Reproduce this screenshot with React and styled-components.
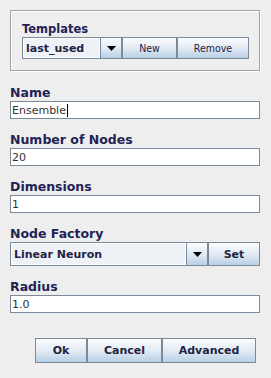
import React from "react";
import styled, { createGlobalStyle } from "styled-components";

const Global = createGlobalStyle`
  html, body { margin: 0; padding: 0; background: #eeeeee; }
  body { font-family: "DejaVu Sans", "Liberation Sans", sans-serif; }
`;

const Page = styled.div`
  width: 250px;
  padding: 10px 11px 0 10px;
  display: flex;
  flex-direction: column;
`;

const Panel = styled.div`
  border: 1px solid #a3a3a3;
  box-shadow: inset 1px 1px 0 #ffffff, 1px 1px 0 #ffffff;
  padding: 10px 10px 10px 11px;
  display: flex;
  flex-direction: column;
  height: 61px;
  box-sizing: border-box;
`;

const PanelLabel = styled.div`
  font-weight: bold;
  font-size: 11.5px;
  line-height: 16px;
  height: 16px;
  color: #222255;
`;

const Row = styled.div`
  display: flex;
  height: ${p => p.$h}px;
`;

const ComboBox = styled.div`
  flex: ${p => (p.$w ? `0 0 ${p.$w}px` : "1 1 auto")};
  display: flex;
  border: 1px solid #7a8a99;
  box-sizing: border-box;
  background: #eef2f7;
`;

const ComboText = styled.div`
  flex: 1;
  border: 1px solid #ffffff;
  display: flex;
  align-items: center;
  padding-left: 2px;
  font-weight: bold;
  font-size: 11px;
  color: #222244;
`;

const ArrowButton = styled.div`
  flex: 0 0 20px;
  border-left: 1px solid #7a8a99;
  background: linear-gradient(#fbfcfe, #dde8f3 55%, #b8cfe5);
  display: flex;
  align-items: center;
  justify-content: center;
`;

const Button = styled.div`
  flex: 0 0 ${p => p.$w}px;
  box-sizing: border-box;
  border: 1px solid #7a8a99;
  background: linear-gradient(#fbfcfe, #e3ebf4 50%, #b8cfe5);
  display: flex;
  align-items: center;
  justify-content: center;
  font-size: ${p => (p.$plain ? "10.5px" : "11px")};
  font-weight: ${p => (p.$plain ? "normal" : "bold")};
  font-family: ${p => (p.$plain ? `"DejaVu Sans Condensed", "DejaVu Sans", sans-serif` : "inherit")};
  color: #222244;
`;

const Label = styled.div`
  font-weight: bold;
  font-size: 12.5px;
  line-height: 17px;
  height: 17px;
  color: #222255;
  margin-top: ${p => p.$mt}px;
`;

const Field = styled.div`
  height: 18px;
  box-sizing: border-box;
  border: 1px solid #7a8a99;
  background: #ffffff;
  display: flex;
  align-items: center;
  padding-left: 1px;
  font-size: 11px;
  color: #333333;
`;

const Caret = styled.span`
  display: inline-block;
  width: 1px;
  height: 13px;
  background: #000;
  margin-left: 1px;
`;

const ButtonBar = styled.div`
  display: flex;
  justify-content: flex-end;
  margin-top: 25px;
  padding-right: 4px;
  height: 25px;
`;

const Arrow = () => (
  <svg width="9" height="5" viewBox="0 0 9 5">
    <path d="M0 0h9L4.5 5z" fill="#000" />
  </svg>
);

export default function App() {
  return (
    <>
      <Global />
      <Page>
        <Panel>
          <PanelLabel>Templates</PanelLabel>
          <Row $h={22}>
            <ComboBox $w={100}>
              <ComboText>last_used</ComboText>
              <ArrowButton><Arrow /></ArrowButton>
            </ComboBox>
            <Button $w={55} $plain>New</Button>
            <Button $w={72} $plain>Remove</Button>
          </Row>
        </Panel>

        <Label $mt={13}>Name</Label>
        <Field>Ensemble<Caret /></Field>

        <Label $mt={12}>Number of Nodes</Label>
        <Field>20</Field>

        <Label $mt={12}>Dimensions</Label>
        <Field>1</Field>

        <Label $mt={12}>Node Factory</Label>
        <Row $h={24}>
          <ComboBox>
            <ComboText>Linear Neuron</ComboText>
            <ArrowButton><Arrow /></ArrowButton>
          </ComboBox>
          <Button $w={52}>Set</Button>
        </Row>

        <Label $mt={12}>Radius</Label>
        <Field>1.0</Field>

        <ButtonBar>
          <Button $w={52}>Ok</Button>
          <Button $w={75}>Cancel</Button>
          <Button $w={94}>Advanced</Button>
        </ButtonBar>
      </Page>
    </>
  );
}
